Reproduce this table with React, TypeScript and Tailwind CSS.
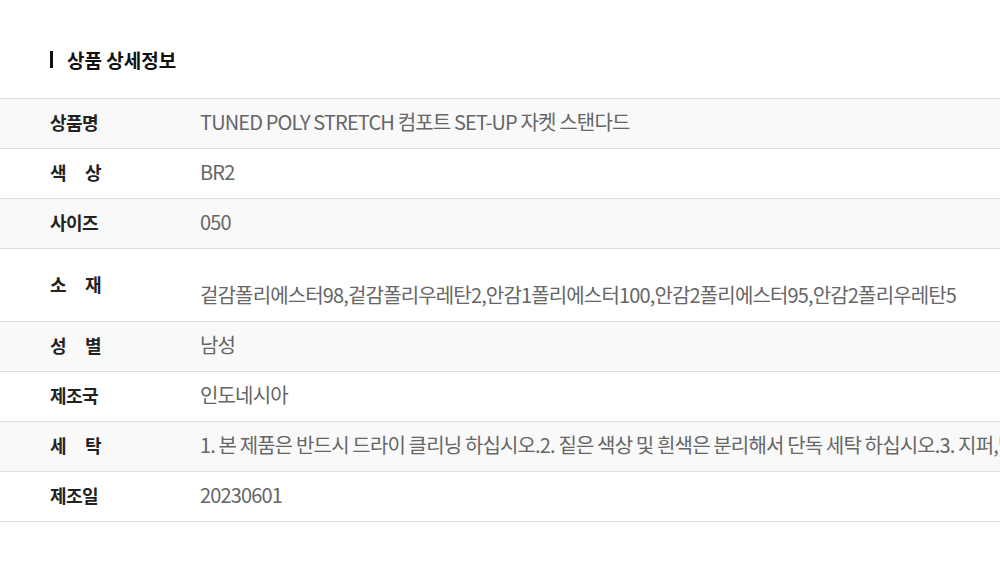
import React from "react";

const rows: { label: string[]; value: string; gray: boolean; tall?: boolean }[] = [
  { label: ["상품명"], value: "TUNED POLY STRETCH 컴포트 SET-UP 자켓 스탠다드", gray: true },
  { label: ["색", "상"], value: "BR2", gray: false },
  { label: ["사이즈"], value: "050", gray: true },
  {
    label: ["소", "재"],
    value: "겉감폴리에스터98,겉감폴리우레탄2,안감1폴리에스터100,안감2폴리에스터95,안감2폴리우레탄5",
    gray: false,
    tall: true,
  },
  { label: ["성", "별"], value: "남성", gray: true },
  { label: ["제조국"], value: "인도네시아", gray: false },
  {
    label: ["세", "탁"],
    value:
      "1. 본 제품은 반드시 드라이 클리닝 하십시오.2. 짙은 색상 및 흰색은 분리해서 단독 세탁 하십시오.3. 지퍼,벨크로 등은 잠근 후 세탁 하십시오.",
    gray: true,
  },
  { label: ["제조일"], value: "20230601", gray: false },
];

export default function App() {
  return (
    <div
      className="w-[1000px] h-[571px] overflow-hidden bg-white"
      style={{ fontFamily: '"Noto Sans CJK KR", "Noto Sans", sans-serif' }}
    >
      <div className="pt-[49px] pl-[50px] flex items-center h-[98px] pb-[28px] box-border">
        <span className="block w-[3px] h-[17px] bg-[#111]" />
        <span className="ml-[14px] text-[19px] font-bold text-[#111] leading-none">
          상품 상세정보
        </span>
      </div>
      <div className="w-[1400px] border-t border-[#dddddd]">
        {rows.map((r, i) => (
          <div
            key={i}
            className={`flex border-b border-[#dddddd] ${r.gray ? "bg-[#f9f9f9]" : "bg-white"} ${
              r.tall ? "h-[73px] pb-[1px]" : "h-[50px] pb-[3px]"
            }`}
          >
            <div className="w-[200px] shrink-0 pl-[50px] flex items-center text-[18px] font-bold text-[#222] tracking-[-0.5px]">
              {r.label.length === 1 ? (
                r.label[0]
              ) : (
                <span className="flex gap-[19px]">
                  <span>{r.label[0]}</span>
                  <span>{r.label[1]}</span>
                </span>
              )}
            </div>
            <div
              className={`flex whitespace-nowrap text-[20px] text-[#666] tracking-[-0.85px] leading-[30px] ${
                r.tall ? "items-end pb-[10px]" : "items-center"
              }`}
            >
              {r.value}
            </div>
          </div>
        ))}
      </div>
    </div>
  );
}
